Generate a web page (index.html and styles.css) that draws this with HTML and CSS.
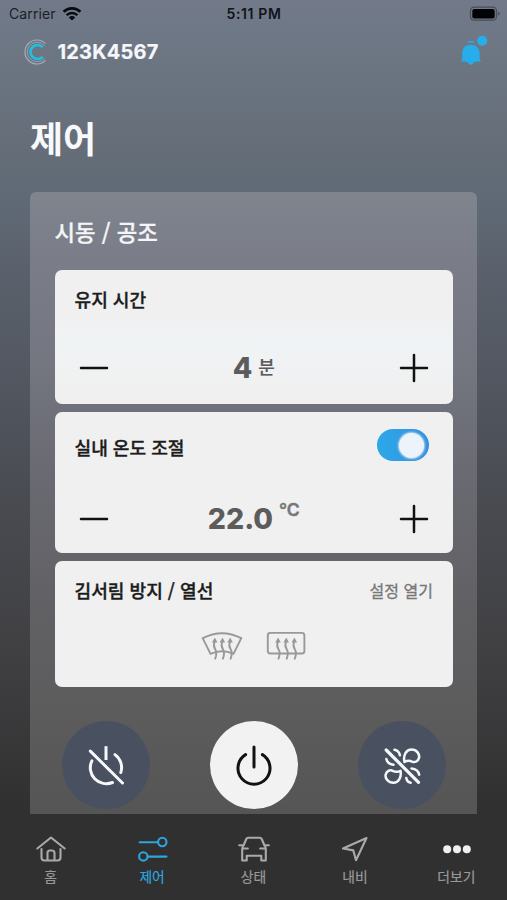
FILE: index.html
```html
<!DOCTYPE html>
<html lang="ko">
<head>
<meta charset="utf-8">
<title>제어</title>
<link rel="stylesheet" href="styles.css">
</head>
<body>
<div class="app">
  <div class="status">
    <div class="status-left">
      <span class="carrier">Carrier</span>
      <svg class="wifi" width="20" height="16" viewBox="0 0 20 16"><path d="M1.6 5.8a12 12 0 0 1 16.8 0" fill="none" stroke="#080b0f" stroke-width="2.7"/><path d="M4.6 9.2a7.6 7.6 0 0 1 10.8 0" fill="none" stroke="#080b0f" stroke-width="2.4"/><path d="M6.8 11.4a4.6 4.6 0 0 1 6.4 0L10 14.6z" fill="#080b0f"/></svg>
    </div>
    <span class="time">5:11 PM</span>
    <svg class="battery" width="32" height="16" viewBox="0 0 32 16"><rect x="1.5" y="1.2" width="26" height="13" rx="3.8" fill="none" stroke="#484d56" stroke-width="1.3"/><rect x="3.3" y="3" width="22.4" height="9.4" rx="2" fill="#020304"/><path d="M29.2 5.6q3.2 2.1 0 4.2z" fill="#484d56"/></svg>
  </div>

  <header class="header">
    <svg class="logo" width="26" height="28" viewBox="0 0 26 28" fill="none"><path d="M23.600 5.700A12 12 0 1 0 23.600 22.300" stroke="#a3adb9" stroke-width="1.2"/><path d="M22.600 7.700A9.800 9.800 0 1 0 22.600 20.300" stroke="#8f9fae" stroke-width="1"/><path d="M20.600 9.200A7 7 0 1 0 20.600 18.800" stroke="#21bfe3" stroke-width="2.600"/></svg>
    <span class="plate">123K4567</span>
    <svg class="bell" width="30" height="32" viewBox="0 0 30 32" fill="#27adeb"><circle cx="23.2" cy="6.8" r="5"/><rect x="9" y="7" width="5.8" height="1.5"/><path d="M1.5 27.3c1.3-.4 1.7-2.1 1.7-4.6v-3.5C3.200 14 6.500 10.800 11.800 10.800s8.800 3.200 8.800 8.400v3.500c0 2.500.5 4.200 1.700 4.600-1.700.7-2.700.3-3.600-.6-.7 1.500-2.600 2-3.600.8-.4 2-1.700 3.200-3.300 3.200S9 29.500 8.700 27.500c-1 1.200-2.900.7-3.600-.8-.9.9-2 1.300-3.600.6z"/></svg>
  </header>

  <h1 class="title">제어</h1>

  <main class="panel">
    <h2 class="panel-title">시동 / 공조</h2>

    <section class="card card-time">
      <div class="card-head"><h3>유지 시간</h3></div>
      <div class="stepper">
        <svg width="30" height="30" viewBox="0 0 30 30"><path d="M2 15H28" class="step"/></svg>
        <div class="value"><b>4</b><span class="unit-min">분</span></div>
        <svg width="30" height="30" viewBox="0 0 30 30"><path d="M2 15H28M15 2V28" class="step"/></svg>
      </div>
    </section>

    <section class="card card-temp">
      <div class="card-head"><h3>실내 온도 조절</h3><div class="toggle"><div class="knob"></div></div></div>
      <div class="stepper">
        <svg width="30" height="30" viewBox="0 0 30 30"><path d="M2 15H28" class="step"/></svg>
        <div class="value"><b>22.0</b><span class="unit-deg">°C</span></div>
        <svg width="30" height="30" viewBox="0 0 30 30"><path d="M2 15H28M15 2V28" class="step"/></svg>
      </div>
    </section>

    <section class="card card-heat">
      <div class="card-head"><h3>김서림 방지 / 열선</h3><span class="link">설정 열기</span></div>
      <div class="defrost">
        <svg width="42" height="32" viewBox="0 0 42 32"><path d="M9.500 23.800 1.700 8.200Q21 -1.800 40.300 8.200L32.500 23.800Q21 18.800 9.500 23.800z" class="glass"/><path d="M13.600 11.500c-1.400 3.500-.9 5.300.5 7.500s1.700 5.500.1 9.700M21.300 11.500c-1.400 3.500-.9 5.300.5 7.500s1.700 5.500.1 9.700M29 11.500c-1.400 3.500-.9 5.300.5 7.500s1.700 5.500.1 9.700" class="wave"/><path d="M10.900 12.500 13.800 7.500l2.700 5zM18.600 12.500 21.500 7.500l2.700 5zM26.300 12.500 29.200 7.500l2.700 5z" fill="#999"/></svg>
        <svg width="40" height="32" viewBox="0 0 40 32"><rect x="1.800" y="2.900" width="36.600" height="20.600" rx="2.500" class="glass"/><path d="M11.900 11.500c-1.400 3.500-.9 5.300.5 7.500s1.700 5.500.1 9.700M20.100 11.500c-1.400 3.500-.9 5.300.5 7.500s1.700 5.500.1 9.700M28.200 11.500c-1.400 3.500-.9 5.300.5 7.500s1.700 5.500.1 9.700" class="wave"/><path d="M9.200 12.500 12.100 7.500l2.700 5zM17.400 12.500 20.300 7.500l2.700 5zM25.500 12.500 28.400 7.500l2.700 5z" fill="#999"/></svg>
      </div>
    </section>

    <div class="actions">
      <button class="round" aria-label="시동 끄기"><svg width="44" height="44" viewBox="0 0 44 44" fill="none" stroke="#f5f7fa" stroke-width="3" stroke-linecap="butt"><path d="M22 3.200V17"/><path d="M6.300 8.100 38.500 40M7.900 17.800A16 16 0 0 0 28.500 39.500M31 11.600A16 16 0 0 1 36.800 29.500" stroke-linecap="round"/></svg></button>
      <button class="round round-on" aria-label="시동 켜기"><svg width="44" height="44" viewBox="0 0 44 44" fill="none" stroke="#111" stroke-width="3" stroke-linecap="round"><path d="M22 4V24M13.600 11.600A16 16 0 1 0 30.400 11.600"/></svg></button>
      <button class="round" aria-label="공조 끄기"><svg width="44" height="44" viewBox="0 0 44 44" fill="none" stroke="#f5f7fa" stroke-width="2.500" stroke-linecap="round" stroke-linejoin="round"><path d="M6.200 7 38.500 39.300" stroke-width="3.200"/><path d="M14.500 6.800q4.500 1 5.400 5.500M6.300 16q1.200 5 7.200 5.800M31.500 25.400q6.600.6 7.700 6.300M26.300 35q.6 4 4.400 4.800"/><path d="M24.500 19C22.800 12 26.500 6.600 31.500 6.600c5.300 0 8.400 4.600 7.500 8.300-.8 3.300-4.100 5.100-7 3.700-2.500-1.300-4.600-1.300-7.500.4zM20.500 27.800c1.300 7-2.200 12-7 12-5.300 0-8.700-4.600-7.800-8.300.8-3.300 4.100-5.100 7-3.700 2.500 1.300 4.900 1.500 7.800 0z"/></svg></button>
    </div>
  </main>

  <nav class="tabs">
    <a class="tab"><svg width="32" height="30" viewBox="0 0 32 30" class="ic"><path d="M2.300 13.500 16 2.500 29.700 13.500M6.500 14v8.500q0 3 3 3h13q3 0 3-3V14M12.500 25v-7q0-2.500 2.500-2.500h2q2.500 0 2.500 2.500v7"/></svg><span>홈</span></a>
    <a class="tab tab-on"><svg width="32" height="30" viewBox="0 0 32 30" class="ic"><path d="M2.700 7.300H20.800M10.800 21.600H29.500"/><circle cx="25.300" cy="7" r="4.200"/><circle cx="6.300" cy="21.400" r="4.200"/></svg><span>제어</span></a>
    <a class="tab"><svg width="32" height="30" viewBox="0 0 32 30" class="ic"><path d="M5.500 10.500 8.300 4q.5-1.200 1.800-1.200h11.800q1.300 0 1.800 1.200l2.800 6.500M1.200 10.200H5l-.8 4V25.500h4.500v-4.700h14.600v4.700h4.500V14.200l-.8-4h3.800M5.500 13.500h4.300M22.200 13.500h4.300"/></svg><span>상태</span></a>
    <a class="tab"><svg width="32" height="30" viewBox="0 0 32 30" class="ic"><path d="M27.500 3 4 13.500 14.300 15.400 17 25.300z"/></svg><span>내비</span></a>
    <a class="tab"><svg width="32" height="30" viewBox="0 0 32 30" fill="#f0f0f0"><circle cx="6.200" cy="14.200" r="4"/><circle cx="16" cy="14.200" r="4"/><circle cx="25.800" cy="14.200" r="4"/></svg><span>더보기</span></a>
  </nav>
</div>
</body>
</html>
```
FILE: styles.css
```css
* { box-sizing: border-box; margin: 0; padding: 0; }
body { width: 507px; height: 900px; overflow: hidden; font-family: Inter, "Noto Sans CJK KR", sans-serif; background: #303030; }
svg { display: block; flex: none; }
.app { display: flex; flex-direction: column; height: 900px; background: linear-gradient(#727a8a 0, #6b7581 70px, #646d78 150px, #5f6a76 200px, #5b616c 270px, #50555e 400px, #494b51 500px, #414144 640px, #363637 760px, #2f2f2f 816px); }

.status { display: grid; grid-template-columns: 1fr auto 1fr; align-items: center; height: 27px; padding: 0 7px 0 9px; font-size: 14px; line-height: 27px; color: #1b2027; }
.status-left { display: flex; align-items: center; gap: 6px; }
.carrier { letter-spacing: .1px; }
.time { font-weight: 600; font-size: 14px; letter-spacing: .6px; margin-right: 1px; color: #111419; }
.battery { justify-self: end; margin-right: -1px; }

.header { display: flex; align-items: center; height: 50px; padding: 0 18px 0 22px; }
.logo { margin-right: 9.500px; }
.plate { flex: 1; font-size: 20px; font-weight: 700; line-height: 24px; letter-spacing: .2px; color: #f5f7fa; -webkit-text-stroke: .2px #f5f7fa; }
.bell { margin-top: -5px; }

.title { height: 115px; padding: 38px 0 0 30px; font-size: 36px; font-weight: 700; line-height: 50px; color: #f8f9fb; }

.panel { width: 447px; height: 622px; margin-left: 30px; padding: 22px 24.5px 0; border-radius: 6px 6px 0 0; background: linear-gradient(#7f848d 0, #797b87 90px, #73757f 180px, #6a6b73 270px, #626266 400px, #5c5c5d 520px, #555 622px); }
.panel-title { height: 56px; font-family: "Noto Sans CJK KR", sans-serif; font-size: 22.300px; font-weight: 500; line-height: 34px; color: #f4f5f8; -webkit-text-stroke: .3px #f4f5f8; }

.card { display: flex; flex-direction: column; border-radius: 7px; padding: 0 20px; background: #f0f0f0; }
.card-time { height: 134px; margin-bottom: 8px; background: linear-gradient(#f0f0f0 35%, #f0f3f5 55%, #f0f0f0 90%); }
.card-temp { height: 141px; margin-bottom: 8px; }
.card-heat { height: 126px; }
.card-head { display: flex; flex: none; justify-content: space-between; height: 60px; }
.card-temp .card-head { height: 68px; }
.card h3 { font-family: "Noto Sans CJK KR", sans-serif; font-size: 18.100px; font-weight: 500; line-height: 28px; margin-top: 15px; color: #1c1c1c; -webkit-text-stroke: .35px #1c1c1c; }
.card-temp h3 { margin-top: 21px; }
.link { font-size: 16px; line-height: 26px; margin: 17px -.5px 0 0; color: #777; -webkit-text-stroke: .3px #777; }

.stepper { display: flex; flex: none; align-items: center; justify-content: space-between; height: 76px; padding: 0 3.500px 0 4px; }
.card-time .stepper { padding-top: 0; }
.card-temp .stepper { padding-top: 2px; }
.step { stroke: #111; stroke-width: 2.500; stroke-linecap: round; }
.value { display: flex; align-items: center; color: #5c5c5c; }
.value b { font-size: 28.500px; font-weight: 800; line-height: 40px; }
.unit-min { margin-left: 6px; font-size: 18px; font-weight: 500; line-height: 28px; -webkit-text-stroke: .2px #5c5c5c; }
.unit-deg { margin: -18px 0 0 6px; font-size: 17.500px; font-weight: 600; line-height: 24px; color: #777; -webkit-text-stroke: .4px #777; }

.toggle { width: 52px; height: 32px; margin: 17px 4px 0 0; padding: 3px 5px; border-radius: 16px; display: flex; align-items: center; justify-content: flex-end; background: linear-gradient(90deg, #2ca8e8, #3691df); }
.knob { width: 25px; height: 25px; border-radius: 50%; background: #edf3fa; box-shadow: 0 0 2px 1px #c4d9ed; }

.defrost { display: flex; justify-content: center; gap: 23px; padding: 9px 0 0 0; }
.glass { fill: none; stroke: #999; stroke-width: 1.900; stroke-linejoin: round; }
.wave { fill: none; stroke: #999; stroke-width: 1.900; stroke-linecap: round; }

.actions { display: flex; justify-content: space-between; padding: 34px 7px 0; }
.round { display: flex; align-items: center; justify-content: center; width: 88px; height: 88px; border: 0; border-radius: 50%; background: #495160; }
.round-on { background: #f2f2f2; }

.tabs { display: grid; grid-template-columns: repeat(5, 1fr); flex: 1; padding-top: 21px; background: #303030; }
.tab { display: flex; flex-direction: column; align-items: center; padding-left: 1px; color: #999; font-size: 13.800px; line-height: 20px; -webkit-text-stroke: .2px currentColor; }
.tab span { margin: 2px 1px 0 0; }
.tab-on { color: #2da5df; }
.ic { fill: none; stroke: #aaa; stroke-width: 2.100; stroke-linejoin: round; stroke-linecap: round; }
.tab-on .ic { stroke: #2da5df; }
```
